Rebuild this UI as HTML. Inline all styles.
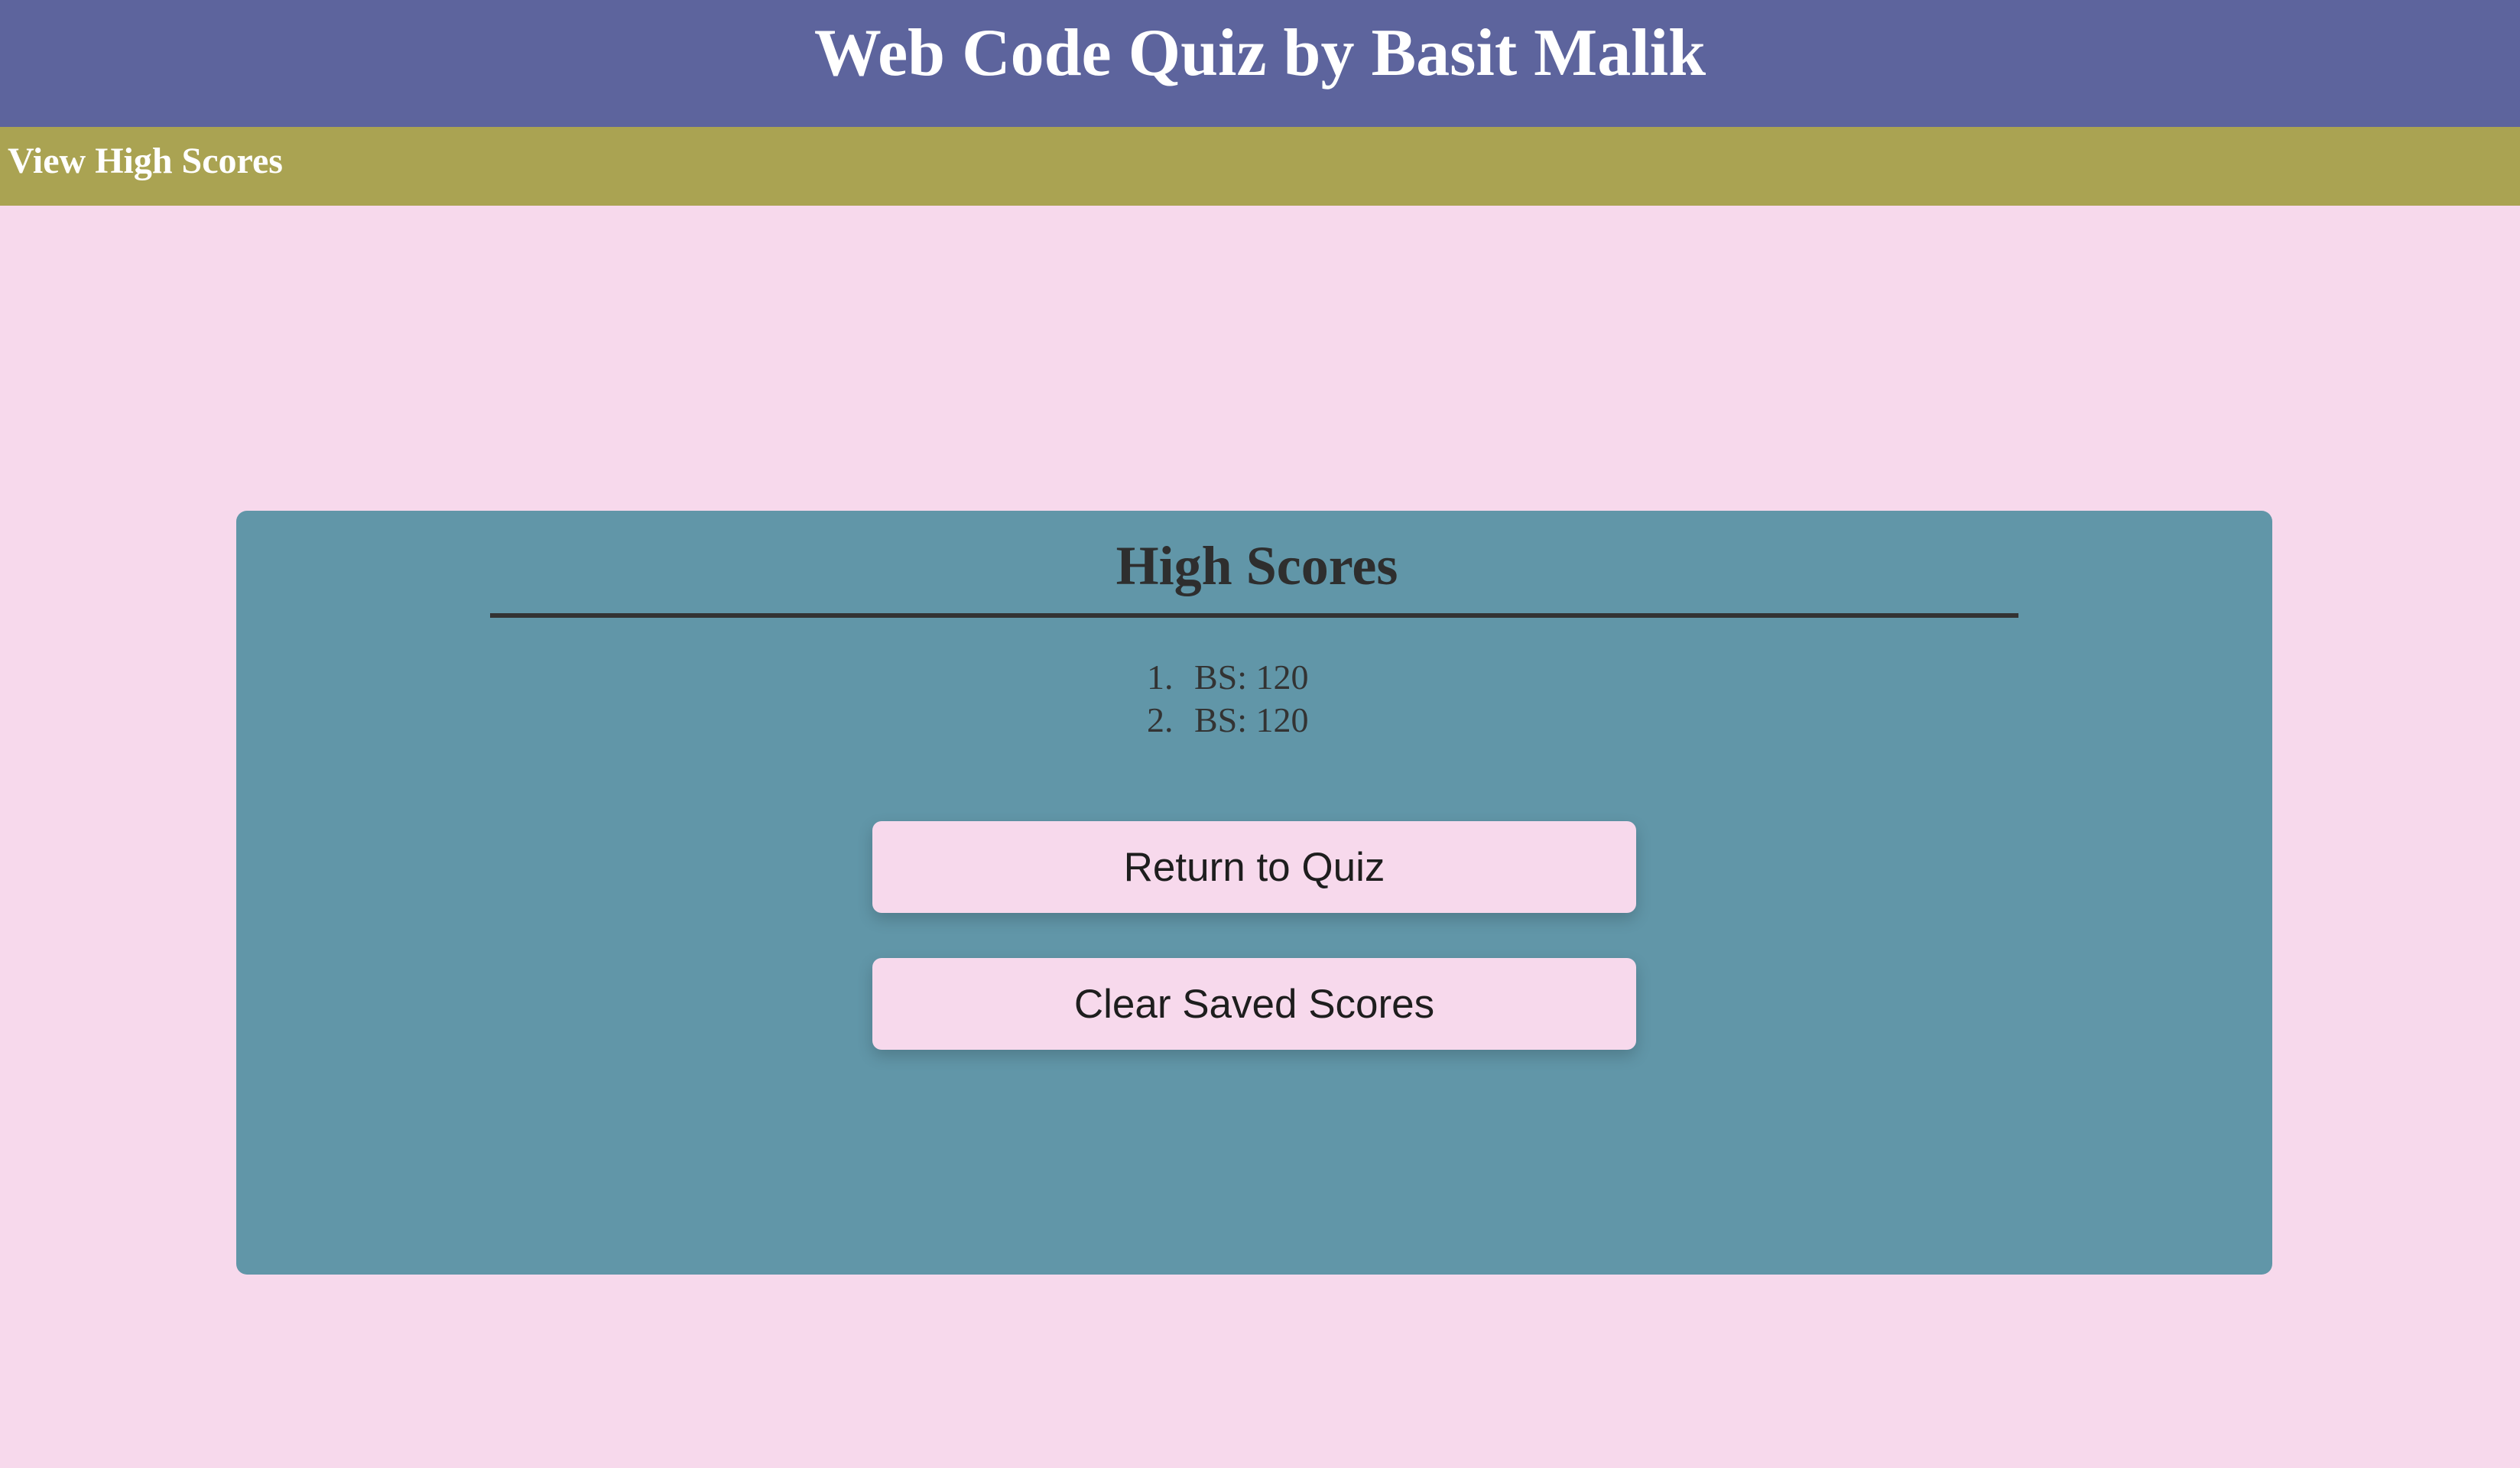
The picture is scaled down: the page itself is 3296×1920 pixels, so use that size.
<!DOCTYPE html>
<html><head><meta charset="utf-8"><style>
html,body{margin:0;padding:0;width:3296px;height:1920px;background:#f7d9ec;overflow:hidden;font-family:"Liberation Serif",serif;}
.hdr{position:absolute;left:0;top:0;width:3296px;height:166px;background:#5d649d;color:#fff;text-align:center;font-weight:bold;font-size:88px;line-height:140px;}
.nav{position:absolute;left:0;top:166px;width:3296px;height:103px;background:#aaa352;color:#fff;font-weight:bold;font-size:48px;line-height:90px;}
.nav span{position:absolute;left:10px;top:0;}
.card{position:absolute;left:309px;top:668px;width:2663px;height:999px;background:#6196a8;border-radius:14px;}
h2{position:absolute;left:0;width:100%;top:700px;margin:0;text-align:center;font-size:72px;line-height:80px;color:#2e2e2e;padding-right:8px;box-sizing:border-box;}
.line{position:absolute;left:641px;top:802px;width:1999px;height:6px;background:#333;}
.li{position:absolute;left:1500px;font-size:46px;color:#333;line-height:56px;}
.li b{font-weight:normal;display:inline-block;width:62px;}
.btn{position:absolute;left:1141px;width:999px;height:120px;background:#f7d9ec;border-radius:12px;box-shadow:0 8px 20px rgba(0,0,0,0.18);text-align:center;line-height:122px;font-family:"Liberation Sans",sans-serif;font-size:53px;color:#1e1e1e;}
</style></head><body>
<div class="hdr">Web Code Quiz by Basit Malik</div>
<div class="nav"><span>View High Scores</span></div>
<div class="card"></div>
<h2>High Scores</h2>
<div class="line"></div>
<div class="li" style="top:858px"><b>1.</b>BS: 120</div>
<div class="li" style="top:914px"><b>2.</b>BS: 120</div>
<div class="btn" style="top:1074px">Return to Quiz</div>
<div class="btn" style="top:1253px">Clear Saved Scores</div>
</body></html>
